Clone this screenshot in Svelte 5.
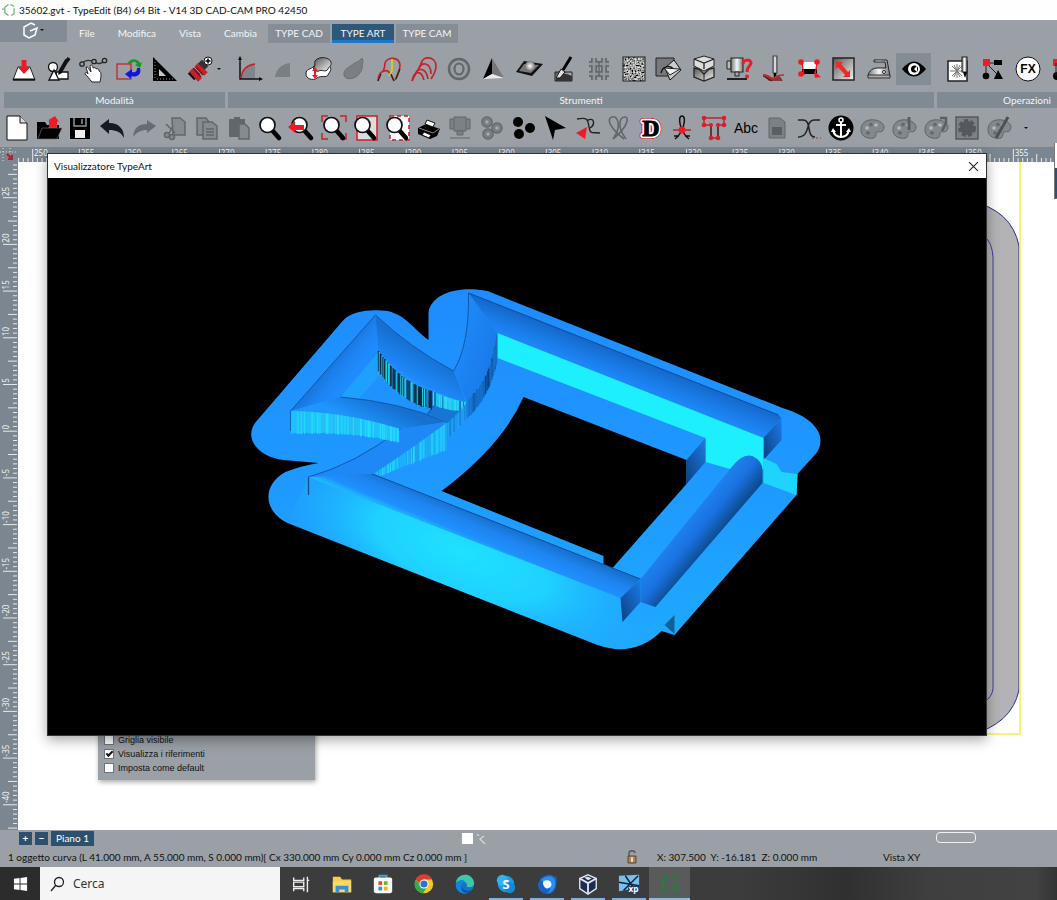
<script>
    const menus = ['File', 'Modifica', 'Vista', 'Cambia'];
    const tabs = ['TYPE CAD', 'TYPE ART', 'TYPE CAM'];
    let activeTab = $state('TYPE ART');
    let showRefs = $state(true);
    let search = $state('');

    const lens = '<path d="M14 14l7 8" stroke="#000" stroke-width="4.5" stroke-linecap="round"/><circle cx="9.500" cy="9" r="7.500" fill="#fff" stroke="#111" stroke-width="1.700"/>';
    const palette = '<path d="M1 14C1 5 9 3 15 4c7 1 11 6 8 10-1 3-4 1-6 2-2 1 0 4-3 6-6 1-13-1-13-8z" fill="#83888c" stroke="#5f6468"/><circle cx="7" cy="12" r="1.800" fill="#b6babd"/><circle cx="11" cy="8.500" r="1.800" fill="#62676b"/><circle cx="16" cy="9" r="1.800" fill="#b6babd"/><circle cx="8" cy="17" r="1.800" fill="#62676b"/>';

    const modeIcons = [
        { name: 'Incidi', svg: '<path d="M6 10h12l5 13H1z" fill="#fff" stroke="#222"/><path d="M1 22.500h22" stroke="#111" stroke-width="2"/><path d="M9.500 3h5v7h4L12 17 5.500 10h4z" fill="#ed1c24"/>' },
        { name: 'Disegno', svg: '<circle cx="6" cy="10" r="4.500" fill="#fff" stroke="#111" stroke-width="1.300"/><path d="M9 15h12v7H10z" fill="#fff" stroke="#111" stroke-width="1.300"/><path d="M7 13l5 10H2z" fill="#fff" stroke="#111" stroke-width="1.300"/><path d="M20 3l-7 12" stroke="#111" stroke-width="4"/><path d="M22 1l-2 3" stroke="#111" stroke-width="3.500"/><path d="M12 14l-1 4 4-2z"/>' },
        { name: 'Nodi', svg: '<path d="M-1 7q6-6 13-2t12-3" fill="none" stroke="#333" stroke-width="1.300"/><g fill="#9aa1a7" stroke="#222" stroke-width="1.300"><circle cx="0" cy="7" r="2.200"/><circle cx="12" cy="4.500" r="2.200"/><circle cx="22.500" cy="3.500" r="2.200"/></g><path d="M4 10c2-1 3 3 5 5l-1-6c1-2 3-1 3 2 2-1 3 0 3 1 2-1 3 0 3 2 3 1 2 6 1 11h-8c-3-3-4-6-7-8 0-2 2-2 3 0z" fill="#fff" stroke="#222"/>' },
        { name: 'Trasforma', svg: '<rect x="0" y="7" width="14" height="15" fill="none" stroke="#c1272d" stroke-width="1.300"/><path d="M10 7c3-6 10-6 13-1l2-1-2 6-5-3 2-1c-2-3-4-3-6 0z" fill="#159a1e"/><path d="M23 11c2 7-4 10-9 8v3l-6-5 7-5v3c3 1 5 0 5-4z" fill="#1018d8"/>' },
        { name: 'Squadra', svg: '<path d="M1 0l24 24H1z"/><path d="M7 12l7 7H7z" fill="#c4c9cd"/><path d="M3 5v16M5 22h17" stroke="#999" stroke-dasharray="1 2"/>' },
        { name: 'Fresa', svg: '<path d="M4 20l6-6" stroke="#111" stroke-width="9"/><path d="M13 11l5-5" stroke="#333" stroke-width="9"/><path d="M4 13l9 10M9 8l10 9" stroke="#c8202a" stroke-width="5"/><path d="M9 10l7 8M7 12l7 8" stroke="#7a1016" stroke-width="1.500"/><circle cx="21" cy="4" r="4" fill="#fff" stroke="#111"/><path d="M18.500 4h5M21 1.500v5" stroke="#000" stroke-width="1.500"/>' }
    ];
    const toolIcons = [
        { name: 'Profilo', svg: '<path d="M4 22C5 14 10 8 18 7v15z" fill="#81868a"/><path d="M3 1v21h20" fill="none" stroke="#111" stroke-width="1.500"/><path d="M1 3l2-4 2 4zM22 20l4 2-4 2z"/><path d="M4 21C5 13 10 8 18 7" fill="none" stroke="#c8202a" stroke-width="1.500"/>' },
        { name: 'Quarto', svg: '<path d="M3 20C4 12 10 7 18 6v14z" fill="#7a7f84"/>' },
        { name: 'Livello', svg: '<path d="M-1 17c0-6 5-4 8-8s10-5 15-1c4 5 0 7-1 10s-7 0-11 3c-4 3-11 1-11-4z" fill="#fff" stroke="#222"/><path d="M8 4c5-6 15-3 16 1s-2 4-3 7c-2 4-7 0-9 2-3 1-7-1-5-4 2-2 0-4 1-6z" fill="url(#metal)" stroke="#222"/><path d="M8 10l3 4H9v4h2l-3 4-3-4h2v-4H5z" fill="#ed1c24"/>' },
        { name: 'Rivoluzione', svg: '<path d="M2 18c-1-6 6-8 9-11l6-3 3-3 1 3c-1 5 0 9-4 13-3 5-14 7-15 1z" fill="#7b7f83" stroke="#6d7276"/>' },
        { name: 'Sweep', svg: '<path d="M6 15C8 10 8 8 8 6c2-6 14-7 15 2 0 5-2 9-5 15" fill="none" stroke="#c8202a" stroke-width="1.600"/><path d="M1 24c0-10 9-14 13-6l3 6" fill="none" stroke="#c8202a" stroke-width="1.600"/><path d="M15 2v12l-3 5" fill="none" stroke="#d2d619" stroke-width="1.600"/><path d="M4 17l-3 7M14 17l3 7M23 12l-4 10" stroke="#222" stroke-width="1.200"/>' },
        { name: 'Sezioni', svg: '<g fill="none" stroke="#c8202a" stroke-width="1.600"><path d="M0 24c2-10 9-12 12-1"/><path d="M3 18c1-7 11-9 13 4"/><path d="M7 12c1-7 12-8 12 5"/><path d="M9 7c1-9 15-8 15 2 0 6-2 8-5 13"/><path d="M0 24L10 5"/></g>' },
        { name: 'Anello', svg: '<circle cx="12" cy="12" r="10" fill="#999da1" stroke="#62676c" stroke-width="2.500"/><ellipse cx="12" cy="12" rx="4.500" ry="5.500" fill="#9aa1a7" stroke="#62676c" stroke-width="2.200"/>' },
        { name: 'Piramide', svg: '<path d="M10 1L1 22l9-5z"/><path d="M10 1v16l12 4z" fill="#777"/><path d="M1 22l9-5 12 4z" fill="#e8e8e8"/>' },
        { name: 'Sfera', svg: '<path d="M7 4l19 3-11 12-16-4z" fill="#111"/><path d="M7 7l15 1-8 8-12-2z" fill="#777"/><circle cx="13" cy="9" r="5" fill="url(#ball)"/>' },
        { name: 'Sculpt', svg: '<path d="M3 15h17v9H3z" fill="url(#metal)" stroke="#222"/><path d="M3 24c4-8 9-9 17-5v5z" fill="#333"/><path d="M19 0l-8 13" stroke="#000" stroke-width="3"/><path d="M9 12l4 3-5 6H4z" fill="#ddd" stroke="#111"/>' },
        { name: 'Trama', svg: '<path d="M2 7h20M2 17h20M7 1v22M17 1v22" stroke="#63686d" stroke-width="6"/><path d="M2 7h20M2 17h20M7 1v22M17 1v22" stroke="#92979b" stroke-width="2.500"/><path d="M12 5v15" stroke="#63686d" stroke-width="1.500"/>' },
        { name: 'Texture', svg: '<rect x="1" y="0" width="22" height="24" fill="#77797b"/><rect x="1" y="0" width="22" height="24" filter="url(#grain)"/><rect x="1" y="0" width="22" height="24" fill="none" stroke="#222"/>' },
        { name: 'Riempi', svg: '<path d="M-1 1h18v18H-1z" fill="#777a7d" stroke="#222"/><path d="M8 11l9-8 7 10-11 10z" fill="#ccc" stroke="#111"/><path d="M4 16c2-8 10-8 13-3" fill="none" stroke="#111" stroke-width="1.400"/><path d="M7 11l16 1-10 6z" fill="#eee" stroke="#222"/>' },
        { name: 'Blocchi', svg: '<path d="M12-1l10 3v7l-10 5L2 9V2z" fill="#ddd" stroke="#222"/><path d="M2 2l10 4 10-4M12 6v6" fill="none" stroke="#222" stroke-width="1.300"/><path d="M2 11l5 1 5 5 5-5 5-1v9l-10 4-10-4z" fill="url(#metal)" stroke="#222" stroke-width="1.300"/><path d="M12 17v7" stroke="#222"/>' },
        { name: 'Simula', svg: '<path d="M0 4h4v8H0z" fill="#bbb" stroke="#222"/><rect x="4" y="1" width="12" height="14" fill="url(#steel)" stroke="#222"/><path d="M8 15h4v4H8z" fill="#aaa" stroke="#222"/><path d="M0 22h20" stroke="#111" stroke-width="1.800"/><path d="M16 7c0-5 8-5 8-1 0 3-4 3-4 9" fill="none" stroke="#ed1c24" stroke-width="3"/><circle cx="20" cy="19.500" r="2" fill="#ed1c24"/>' },
        { name: 'Tasta', svg: '<rect x="11" y="-1" width="4" height="17" fill="url(#steel)" stroke="#444"/><path d="M13 16v4" stroke="#000" stroke-width="2.500"/><path d="M1 18c6-2 9 5 13 2 4-3 5 1 7 4H7z" fill="#7c3a38"/><path d="M1 18c5-1 8 5 11 3 3-3 6-3 10-3" fill="none" stroke="#d8222a" stroke-width="1.600"/><path d="M1 19l9 5" stroke="#222"/>' },
        { name: 'Scala', svg: '<path d="M6 5h13v7H6z" fill="#fff"/><path d="M5 12h15v5H5z"/><path d="M5 6l2 12M20 6l-2 12" stroke="#ed1c24" stroke-width="1.300"/><g fill="#ed1c24"><circle cx="4" cy="5" r="2.800"/><circle cx="20" cy="5" r="2.800"/><circle cx="4" cy="17" r="2.800"/><path d="M17 14l7 6-6 1z"/></g>' },
        { name: 'Allunga', svg: '<rect x="1" y="1" width="21" height="22" fill="url(#metal)" stroke="#222" stroke-width="1.500"/><path d="M4 5h7l-2 2 7 8 2-2v7h-7l2-2-7-8-2 2z" fill="#ed2b24"/>' },
        { name: 'Liscia', svg: '<path d="M1 19c1-6 5-8 10-8h8l-1-6H7V3h13l3 16z" fill="url(#steel)" stroke="#222"/><path d="M1 18h22v3H1z" fill="#aaa" stroke="#333"/><circle cx="17" cy="15" r="1.500" fill="#fff" stroke="#222"/>' },
        { name: 'Visualizza', active: true, svg: '<path d="M0 12Q12-3 24 12 12 27 0 12z" fill="#000"/><circle cx="12" cy="12" r="6" fill="#fff"/><circle cx="12.500" cy="12" r="3.500" fill="#000"/><path d="M12 12l3-3v6z" fill="#fff"/>' }
    ];
    const opIcons = [
        { name: 'Incisione', svg: '<path d="M2 4h19v20H2z" fill="#fff" stroke="#222" stroke-width="1.500"/><path d="M4 14h14M11 7v14M6 9l10 10M16 9L6 19M8 8l6 12M14 8L8 20" stroke="#777"/><rect x="16" y="0" width="5" height="15" fill="url(#steel)" stroke="#222"/><path d="M17 15h4l-2 6z"/>' },
        { name: 'Albero', svg: '<path d="M5 6h12M5 6l13 13M5 6v13" stroke="#222"/><path d="M2 2h7v7H2z" fill="#ed1c24"/><path d="M13 3h8v5h-8z"/><circle cx="5" cy="19" r="3.300"/><path d="M17 13l5 9h-9z"/>' },
        { name: 'FX', svg: '<circle cx="12" cy="12" r="12" fill="#fff" stroke="#111"/><text x="12" y="16" text-anchor="middle" font-family="Liberation Sans" font-weight="bold" font-size="12">FX</text>' },
        { name: 'Gruppo', svg: '<path d="M2 2h7v7H2z" fill="#ed1c24"/><circle cx="6" cy="19" r="4"/><path d="M5 6v13" stroke="#222"/>' }
    ];
    const barIcons = [
        { name: 'Nuovo', svg: '<path d="M2 0h13l7 7v17H2z" fill="#fff" stroke="#111"/><path d="M15 0v7h7" fill="#ddd" stroke="#111"/>' },
        { name: 'Apri', svg: '<path d="M0 6h8l2 3h12v14H0z"/><path d="M12 10V4l-2 1 8-5 4 6-2-1v9l-9-1z" fill="#ed1c24"/><path d="M1 23l4-11h20l-5 11z" stroke="#777" stroke-width=".6"/>' },
        { name: 'Salva', svg: '<path d="M2 2h20v21H2z"/><path d="M6 2v8h12V2M14 3v5" fill="none" stroke="#8e9499" stroke-width="1.500"/><path d="M7 14h10v8H7z" fill="#eee"/>' },
        { name: 'Annulla', svg: '<path d="M0 10l9-7v4c10 0 15 6 15 15-3-6-8-8-15-8v4z" fill="#151b22"/>' },
        { name: 'Ripeti', svg: '<path d="M24 10l-9-6v4C6 8 2 12 1 21c4-5 8-7 14-7v3z" fill="#666c71"/>' },
        { name: 'Taglia', svg: '<g fill="#868b8f" stroke="#62676b" stroke-width="1.500"><path d="M9 2h8l5 4v13H10z"/><path d="M3 8l9 9M10 10l-5 9" fill="none"/><circle cx="4" cy="19" r="2.500"/><circle cx="9" cy="21" r="2.500"/></g>' },
        { name: 'Copia', svg: '<g fill="#868b8f" stroke="#62676b" stroke-width="1.500"><path d="M2 2h9l3 4v13H2z"/><path d="M8 6h9l5 4v13H8z"/><path d="M11 13h8M11 16h8M11 19h8"/></g>' },
        { name: 'Incolla', svg: '<path d="M2 3h16v18H2z" fill="#62676b"/><path d="M7 1h6v4H7z" fill="#62676b"/><path d="M12 8h6l4 4v11H12z" fill="#868b8f" stroke="#62676b" stroke-width="1.500"/>' },
        { name: 'Zoom', svg: lens },
        { name: 'Zoom precedente', svg: lens + '<path d="M-2 11l7-6v4h9v5H5v3z" fill="#ed1c24"/>' },
        { name: 'Zoom selezione', svg: '<path d="M6 0H0v6M18 0h6v6M6 23H0v-6M18 23h6v-6" fill="none" stroke="#c8202a" stroke-width="1.500"/>' + lens },
        { name: 'Zoom tutto', svg: '<path d="M4 0h20v24H4z" fill="#ddd" stroke="#c8202a" stroke-width="1.500"/>' + lens },
        { name: 'Zoom pagina', svg: '<path d="M5 0h19v24H5z" fill="#fff" stroke="#c8202a" stroke-dasharray="4 3" stroke-width="1.500"/>' + lens },
        { name: 'Stampa', svg: '<path d="M1 12l8-4 14 5-3 7-7 3-12-5z"/><path d="M10 4l8 3-2 4-8-3z" fill="#fff" stroke="#111"/><path d="M7 16l7 3-2 3-7-3z" fill="#fff" stroke="#111"/><path d="M2 12l14 5 6-4" fill="none" stroke="#888"/>' },
        { name: 'Macchina', svg: '<g fill="#7c8185" stroke="#62676b"><path d="M2 3h20v10H2z"/><path d="M6 1h12v14H6z"/><path d="M9 15h6v4H9zM2 22h20"/></g>' },
        { name: 'Oggetti', svg: '<g fill="#787d81" stroke="#62676b" stroke-width="1.200"><circle cx="7" cy="6" r="5.200"/><circle cx="17" cy="12" r="5.200"/><circle cx="8" cy="18" r="5.200"/></g><g fill="#a5a9ac"><circle cx="7" cy="6" r="1.800"/><circle cx="17" cy="12" r="1.800"/><circle cx="8" cy="18" r="1.800"/></g>' },
        { name: 'Punti', svg: '<circle cx="6" cy="6" r="5"/><circle cx="18" cy="12" r="5"/><circle cx="7" cy="18" r="5"/>' },
        { name: 'Seleziona', svg: '<path d="M1 0l21 12-11 2-2 10z"/>' },
        { name: 'Tangente', svg: '<path d="M2 3c10-2 11 0 12 8s4 5 11 6M13 4c7-3 7 5 2 8" fill="none" stroke="#222" stroke-width="1.400"/><path d="M1 17l11-6-2 12z" fill="#ed1c24"/>' },
        { name: 'Fiocco', svg: '<path d="M6 23C20 12 23 1 18 1s-9 9 1 22M17 23C3 12-1 3 5 1s10 10 1 22" fill="none" stroke="#62676b" stroke-width="1.600"/>' },
        { name: 'Contorno', svg: '<g text-anchor="middle" font-family="Liberation Serif" font-weight="bold" font-size="24" stroke-linejoin="round"><text x="12" y="20" stroke="#c8202a" stroke-width="6">D</text><text x="12" y="20" stroke="#fff" stroke-width="4.500">D</text><text x="12" y="20" stroke="#000">D</text></g>' },
        { name: 'Incrocio', svg: '<path d="M5 23c9-7 12-23 7-23S10 16 19 23M4 20h5M15 20h5" fill="none" stroke="#111" stroke-width="1.500"/><path d="M3 14h18" stroke="#c8202a" stroke-width="1.500"/><circle cx="12" cy="14" r="3.500" fill="#ed1c24"/>' },
        { name: 'Testo nodi', svg: '<path d="M2 2h20v7h-6v13H9V9H2z" fill="none" stroke="#c8202a" stroke-width="1.500"/><path d="M9 10v11M16 10v11" stroke="#333" stroke-width="1.300"/><g fill="#d81e28"><circle cx="2" cy="2" r="2.300"/><circle cx="22" cy="2" r="2.300"/><circle cx="2" cy="9" r="2.300"/><circle cx="22" cy="9" r="2.300"/><circle cx="9" cy="9" r="2"/><circle cx="16" cy="9" r="2"/><circle cx="9" cy="22" r="2.300"/><circle cx="16" cy="22" r="2.300"/></g>' },
        { name: 'Testo', svg: '<text x="12" y="17" text-anchor="middle" font-family="Liberation Sans" font-size="14">Abc</text>' },
        { name: 'Modello', svg: '<path d="M4 2h11l5 4v16H4z" fill="#7c8185" stroke="#62676b"/><path d="M7 11h10v8H7z" fill="#5a5f63"/>' },
        { name: 'Raccordo', svg: '<path d="M1 4h5c9 0 3 17 12 17M23 4h-6c-9 0-3 17-16 17" fill="none" stroke="#222" stroke-width="1.500"/><path d="M15 22h9" stroke="#a33" stroke-dasharray="2 2"/>' },
        { name: 'Ancora', svg: '<circle cx="12" cy="12" r="12.500"/><path d="M12 6v16M7 9h10M4 14c1 5 4 7 8 7s7-2 8-7" fill="none" stroke="#fff" stroke-width="2"/><circle cx="12" cy="4" r="2" fill="none" stroke="#fff" stroke-width="1.500"/><path d="M2 16l2-4 3 4zM17 16l3-4 2 4z" fill="#fff"/>' },
        { name: 'Colori', svg: palette },
        { name: 'Colori 2', svg: palette + '<path d="M17 1v13" stroke="#5a5f63" stroke-width="3"/>' },
        { name: 'Colori 3', svg: palette + '<path d="M16 2h6v5l-4 8" fill="none" stroke="#5a5f63" stroke-width="2.500"/>' },
        { name: 'Sfondo', svg: '<path d="M1 1h22v22H1z" fill="#7d8286" stroke="#55595d" stroke-width="1.500"/><circle cx="12" cy="12" r="7" fill="#55595d" stroke="#55595d" stroke-width="4" stroke-dasharray="4 2"/>' },
        { name: 'Pennello', svg: palette + '<path d="M21 1L9 22" stroke="#4c5155" stroke-width="3"/>' }
    ];

    const apps = [
        { name: 'Visualizzazione attività', svg: '<path d="M4 5v3h11V5M4 20v-3h11v3M4 10h11v5H4zM19 4v17M19 8h2" fill="none" stroke="#eee" stroke-width="1.500"/>' },
        { name: 'Esplora file', svg: '<path d="M2 4h8l2 3h10v14H2z" fill="#f8cf4a"/><path d="M2 9h20v12H2z" fill="#fbd968"/><path d="M5 21v-7h14v7h-4v-3H9v3z" fill="#3b8fd4"/>' },
        { name: 'Microsoft Store', svg: '<path d="M8 6V3h8v3" fill="none" stroke="#3aa3dd" stroke-width="2"/><rect x="2" y="5" width="20" height="17" rx="2" fill="#f8f8f8"/><path d="M7 9h4v4H7z" fill="#e74b25"/><path d="M13 9h4v4h-4z" fill="#6fb52c"/><path d="M7 15h4v4H7z" fill="#2a94dc"/><path d="M13 15h4v4h-4z" fill="#f4b41a"/>' },
        { name: 'Chrome', svg: '<circle cx="12" cy="12" r="10" fill="#f9c825"/><path d="M3 7a10 10 0 0 1 18 0h-9v10z" fill="#e23b30"/><path d="M3 7a10 10 0 0 0 8 15l5-8-8-1z" fill="#34a853"/><circle cx="12" cy="12" r="5" fill="#fff"/><circle cx="12" cy="12" r="3.900" fill="#2f70e0"/>' },
        { name: 'Edge', svg: '<circle cx="12" cy="12" r="10" fill="#1673c5"/><path d="M2 11C3 0 20-2 22 11c0 5-6 5-8 4 2-6-8-9-12-4z" fill="#3cc8a8"/><path d="M2 12c4-6 9-5 10-2-3 0-5 3-3 7s7 5 10 2c-8 8-18 1-17-7z" fill="#0f86dd"/><path d="M9 12c-2 7 6 9 11 6-4 6-15 5-11-6z" fill="#174f9c"/>' },
        { name: 'Skype', open: true, svg: '<circle cx="12" cy="12" r="9" fill="#1a9de8"/><circle cx="8" cy="8" r="6" fill="#30b4f0"/><circle cx="16" cy="16" r="6" fill="#1288d8"/><text x="12" y="17" text-anchor="middle" font-family="Open Sans" font-weight="bold" font-size="14" fill="#fff">S</text>' },
        { name: 'Thunderbird', open: true, svg: '<path d="M2 12l3-6c5-5 12-5 15-2l2-1c1 8 1 19-9 20C6 23 2 18 2 12z" fill="#1762c8"/><path d="M5 8c5-6 15-6 16 1s-3 13-9 13c6-3 5-11-7-14z" fill="#2490f0"/><path d="M8 9c4-2 9-1 9 4-1 3-5 5-7 3s-3-4-2-7z" fill="#f2f7ff"/>' },
        { name: 'VirtualBox', open: true, svg: '<path d="M12 2l9 4v11l-9 6-9-6V6z" fill="#1c2b50" stroke="#dfe6f2" stroke-width="1.500"/><path d="M3 6l9 5 9-5M12 11v11" fill="none" stroke="#dfe6f2" stroke-width="2"/><path d="M8 5l4-1 4 2-4 2z" fill="#dfe6f2"/>' },
        { name: 'XP', open: true, svg: '<path d="M1 3l22-1v14L1 20z" fill="#79c0ee"/><path d="M1 10l22 4M8 3l10 15M22 3L6 19" stroke="#10233c" stroke-width="1.600"/><path d="M11 14h12v9H11z" fill="#1c3d66"/><text x="17" y="21" text-anchor="middle" font-family="Open Sans" font-weight="bold" font-size="9" fill="#fff">xp</text>' },
        { name: 'TypeEdit', open: true, active: true, svg: '<path d="M10 4L4 8v8l6 4M15 4l5 3M20 13v4l-5 3M15 12h5" fill="none" stroke="#2c7a42" stroke-width="3"/>' }
    ];

    // rulers: one tick each half millimetre, a number every five
    const hTicks = Array.from({ length: 226 }, (_, i) => ({ pos: 14 + i * 4.67, i: i - 4 }));
    const hLabels = Array.from({ length: 22 }, (_, i) => ({ pos: 33 + i * 46.7, text: 250 + i * 5 }));
    const vTicks = Array.from({ length: 143 }, (_, i) => ({ pos: 3 + i * 4.67, i: i - 7 }));
    const vLabels = Array.from({ length: 14 }, (_, i) => ({ pos: 35 + i * 46.7, text: 25 - i * 5 }));

    // vertical streaks on the curved walls of the relief
    function streaks(x0, y0, cx, cy, x1, y1, h0, h1, colors) {
        const out = [];
        const n = Math.round(Math.abs(x1 - x0));
        for (let i = 0; i < n; i++) {
            const t = i / n;
            const x = (1 - t) * (1 - t) * x0 + 2 * t * (1 - t) * cx + t * t * x1;
            const y = (1 - t) * (1 - t) * y0 + 2 * t * (1 - t) * cy + t * t * y1;
            const r = Math.abs(Math.sin(i * 12.9898 + x0) * 43758.5453) % 1;
            const h = h0 + (h1 - h0) * t;
            out.push({ x, y, y2: y + h * (0.92 + r * 0.08), color: colors[Math.floor(r * colors.length)] });
        }
        return out;
    }
    const walls = [
        ...streaks(378, 351, 402, 384, 432, 391, 22, 19, ['#06283c', '#1ec8f0', '#0a3a58', '#2fd6e2', '#0b2f3c', '#1a8cc8']),
        ...streaks(432, 391, 450, 400, 466, 402, 15, 9, ['#1ec8f0', '#2fe6f2', '#1676c0', '#28d4f8']),
        ...streaks(291, 411, 345, 412, 399, 429, 24, 14, ['#1ec0ff', '#20c4fc', '#28bcf4', '#1ed0ff', '#26dcfc']),
        ...streaks(446, 423, 415, 446, 373, 474, 28, 5, ['#1eb4ff', '#22ccff', '#1ca4ec', '#1eb0f8', '#28d8fc']),
        ...streaks(447, 423, 458, 413, 467, 402, 16, 16, ['#1e98f0', '#1a84dc', '#1ea4f4']),
        ...streaks(497, 334, 491, 375, 466, 402, 24, 18, ['#1260b4', '#1470c8', '#0c3f80', '#126cc4', '#1a84e4']),
        ...streaks(497, 334, 491, 375, 472, 396, 22, 16, ['#1260b4', '#1470c8', '#0c3f80', '#126cc4'])
    ];
    const base = 'M428 340V313C430 295 455 285 487 291L782 408C815 418 827 436 816 453L797 474L796 495L674 635L661 631C642 650 620 653 597 645L287 523C264 512 260 486 285 472Q300 466 318 463L283 460C255 456 242 436 257 420L343 320C352 311 370 309 387 311C405 315 412 328 428 340ZM523 397Q502 445 441 491L603 556V564L612 568L686 484V460Z';
</script>

{#snippet icon(svg)}
    <svg class="icon" viewBox="0 0 24 24" aria-hidden="true">{@html svg}</svg>
{/snippet}

{#snippet tools(list)}
    {#each list as item}
        <button class="tool" class:active={item.active} aria-label={item.name}>{@render icon(item.svg)}</button>
    {/each}
{/snippet}

<svg class="defs" aria-hidden="true">
    <defs>
        <linearGradient id="metal" x1="0" y1="0" x2="1" y2="1"><stop offset="0" stop-color="#555" /><stop offset="1" stop-color="#f4f4f4" /></linearGradient>
        <linearGradient id="steel"><stop offset="0" stop-color="#777" /><stop offset=".5" stop-color="#f6f6f6" /><stop offset="1" stop-color="#777" /></linearGradient>
        <radialGradient id="ball"><stop offset="0" stop-color="#fff" /><stop offset="1" stop-color="#777" /></radialGradient>
        <filter id="grain" x="0" y="0" width="1" height="1"><feTurbulence type="fractalNoise" baseFrequency=".6" /><feColorMatrix values="2 0 0 0 -.65  2 0 0 0 -.65  2 0 0 0 -.65  0 0 0 0 1" /></filter>
    </defs>
</svg>

<div class="app">
    <header class="title-bar">
        <svg viewBox="0 0 14 14" aria-hidden="true"><path d="M7 1L3 4v6l4 3M9 1l4 2M13 5v6l-3 2M0 6h2" fill="none" stroke="#6fae6f" stroke-width="1.300" /></svg>
        <h1>35602.gvt - TypeEdit (B4) 64 Bit - V14 3D CAD-CAM PRO 42450</h1>
    </header>

    <nav class="menu-bar">
        <button class="logo" aria-label="Menu principale">
            <svg viewBox="0 0 24 20" aria-hidden="true">
                <path d="M13 5l-4-2-7 4v8l5 3 6-3 2-7-7 3" fill="none" stroke="#fff" stroke-width="1.500" />
                <path d="M18 9h4l-2 2z" fill="#111" />
            </svg>
        </button>
        <div class="menus">
            {#each menus as menu}
                <button class="menu">{menu}</button>
            {/each}
        </div>
        <div class="tabs">
            {#each tabs as tab}
                <button class="tab" class:selected={activeTab === tab} onclick={() => (activeTab = tab)}>{tab}</button>
            {/each}
        </div>
    </nav>

    <section class="ribbon">
        <div class="group modes">
            <div class="icons">
                {@render tools(modeIcons)}
                <button class="more" aria-label="Altre modalità"></button>
            </div>
            <h2>Modalità</h2>
        </div>
        <div class="group strumenti">
            <div class="icons">{@render tools(toolIcons)}</div>
            <h2>Strumenti</h2>
        </div>
        <div class="group operazioni">
            <div class="icons">{@render tools(opIcons)}</div>
            <h2>Operazioni</h2>
        </div>
    </section>

    <section class="toolbar">
        {@render tools(barIcons)}
        <button class="more last" aria-label="Altri comandi"></button>
    </section>

    <div class="ruler-row">
        <svg class="origin" viewBox="0 0 18 15" aria-hidden="true">
            <path d="M3 1v14M0 5h18M10 1v4" stroke="#dde1e4" stroke-dasharray="1 2" /><path d="M7 7l5 5m0-4v4H8" fill="none" stroke="#a02838" stroke-width="2" />
        </svg>
        <svg class="ruler-h" aria-hidden="true">
            {#each hTicks as t}
                <path d="M{t.pos - 18} 15v{t.i % 10 === 0 ? -13 : t.i % 5 === 0 ? -8 : -4}" />
            {/each}
            {#each hLabels as l}
                <text x={l.pos - 17} y="9">{l.text}</text>
            {/each}
        </svg>
    </div>

    <main class="workspace">
        <svg class="ruler-v" aria-hidden="true">
            {#each vTicks as t}
                <path d="M17 {t.pos}h{t.i % 10 === 0 ? -14 : t.i % 5 === 0 ? -9 : -4}" />
            {/each}
            {#each vLabels as l}
                <text transform="translate(9 {l.pos - 1}) rotate(-90)">{l.text}</text>
            {/each}
        </svg>
        <div class="canvas">
            <svg class="part" viewBox="0 0 60 580" aria-hidden="true">
                <path d="M0 39Q42 48 49 84V528Q42 562 0 573z" fill="#b3b3b5" stroke="#2b2b8c" />
                <path d="M14 74Q22 80 23 95V527Q22 535 14 540" fill="none" stroke="#3c3ca0" />
                <path d="M50 0V572H0" fill="none" stroke="#f4f43c" stroke-width="1.500" />
            </svg>
            <div class="options">
                <label><input type="checkbox" />Griglia visibile</label>
                <label><input type="checkbox" bind:checked={showRefs} />Visualizza i riferimenti</label>
                <label><input type="checkbox" />Imposta come default</label>
            </div>
        </div>

        <section class="viewer">
            <header>
                <h2>Visualizzatore TypeArt</h2>
                <button class="close" aria-label="Chiudi">
                    <svg viewBox="0 0 10 10"><path d="M1 1l8 8M9 1l-8 8" stroke="#222" /></svg>
                </button>
            </header>
            <svg class="scene" viewBox="48 178 937 557" role="img" aria-label="Modello 3D">
                <defs>
                    <linearGradient id="floor" gradientUnits="userSpaceOnUse" x1="480" y1="290" x2="480" y2="650"><stop offset="0" stop-color="#1e8cff" /><stop offset=".5" stop-color="#1e98ff" /><stop offset="1" stop-color="#1eaaff" /></linearGradient>
                    <linearGradient id="ridge" gradientUnits="userSpaceOnUse" x1="631" y1="355" x2="617" y2="391"><stop offset="0" stop-color="#1464c4" /><stop offset=".35" stop-color="#1878e2" /><stop offset=".75" stop-color="#1e88fa" /><stop offset="1" stop-color="#1eb0ff" /></linearGradient>
                    <linearGradient id="front" gradientUnits="userSpaceOnUse" x1="509" y1="527" x2="497" y2="556"><stop offset="0" stop-color="#1670cc" /><stop offset=".35" stop-color="#1e84f0" /><stop offset=".75" stop-color="#1e90ff" /><stop offset="1" stop-color="#1ec8ff" /></linearGradient>
                    <linearGradient id="rod" gradientUnits="userSpaceOnUse" x1="684" y1="520" x2="711" y2="542"><stop offset="0" stop-color="#1e84f0" /><stop offset=".5" stop-color="#1a72e0" /><stop offset=".7" stop-color="#1464c4" /><stop offset="1" stop-color="#0e4c90" /></linearGradient>
                    <linearGradient id="end" x1="1" y1="0" x2="0" y2="1"><stop offset="0" stop-color="#1c7ce8" /><stop offset="1" stop-color="#0c3f80" /></linearGradient>
                    <linearGradient id="left" gradientUnits="userSpaceOnUse" x1="325" y1="360" x2="350" y2="380"><stop offset="0" stop-color="#166fd0" /><stop offset=".6" stop-color="#1e84f4" /><stop offset="1" stop-color="#1e8cff" /></linearGradient>
                    <linearGradient id="lower" gradientUnits="userSpaceOnUse" x1="375" y1="398" x2="362" y2="425"><stop offset="0" stop-color="#1670d0" /><stop offset="1" stop-color="#1e96ff" /></linearGradient>
                    <linearGradient id="upper" gradientUnits="userSpaceOnUse" x1="422" y1="350" x2="406" y2="378"><stop offset="0" stop-color="#1670d0" /><stop offset="1" stop-color="#1e8cff" /></linearGradient>
                    <linearGradient id="side" gradientUnits="userSpaceOnUse" x1="460" y1="330" x2="494" y2="340"><stop offset="0" stop-color="#1e88f8" /><stop offset="1" stop-color="#1a7cea" /></linearGradient>
                    <radialGradient id="glow" gradientUnits="userSpaceOnUse" cx="0" cy="0" r="1" gradientTransform="translate(462 552) rotate(22) scale(205 85)"><stop offset="0" stop-color="#1ee2ff" /><stop offset=".45" stop-color="#1ed6ff" stop-opacity=".92" /><stop offset="1" stop-color="#1eaaff" stop-opacity="0" /></radialGradient>
                    <clipPath id="wall"><path d="M308 477L620 598L622 622L661 631L620 655L597 645L287 523z" /></clipPath>
                </defs>
                <path d={base} fill="url(#floor)" fill-rule="evenodd" />

                <!-- lower wall and its lit face -->
                <path d="M287 470H660V650L597 645L287 523z" fill="url(#glow)" clip-path="url(#wall)" />
                <path d="M308 477V495" stroke="#0d4f92" stroke-width="1.300" />

                <!-- cross-shaped ridges on the left -->
                <path d="M375 315L378 352L340 397L290 411z" fill="url(#left)" />
                <path d="M290 411L340 397Q400 402 446 422L400 429Q345 412 290 411z" fill="url(#lower)" />
                <path d="M400 429L446 422Q420 447 372 474L420 494L308 477Q355 464 400 429z" fill="#1e88f6" />
                <path d="M375 315Q410 348 453 371L466 403Q412 387 378 352z" fill="url(#upper)" />
                <path d="M453 371Q469 345 468 293L497 333Q494 366 467 403z" fill="url(#side)" />
                <path d="M378 352L340 397Q350 398 358 399L382 372z" fill="#1ea0ff" />
                <path d="M375 315Q410 348 453 371Q469 345 468 293M375 315L290 411V431M340 397Q400 402 446 422V438M308 477Q355 464 400 429" fill="none" stroke="#0f58ac" />
                <path d="M427 414L438 399Q455 402 467 408L447 423z" fill="#1975d4" />
                <path d="M427 414L438 399" stroke="#0d4c98" />

                {#each walls as w}
                    <path d="M{w.x} {w.y}V{w.y2}" stroke={w.color} stroke-width="1.300" />
                {/each}

                <!-- top bar -->
                <path d="M468 293L778 415L781 418L763 438L497 333z" fill="url(#ridge)" />
                <path d="M468 293L778 415" stroke="#0f4c9a" />
                <path d="M763 438L781 418V440L763 460z" fill="url(#end)" />
                <path d="M497 333L763 438V469L733 470L705 462V438L497 358z" fill="#1eefff" />
                <path d="M686 460L705 438V462L686 484z" fill="url(#end)" />
                <path d="M763 458L776 464L781 472L797 474L796 495L763 483z" fill="#1ed4ff" />

                <!-- hinge rod -->
                <path d="M640 579L732 466Q742 453 752 456Q762 461 762 470V483L655 607L640 602z" fill="url(#rod)" />

                <!-- front bar -->
                <path d="M308 477L372 474L640 579L620 598z" fill="url(#front)" />
                <path d="M372 474L640 579" stroke="#0f4c9a" />
                <path d="M620 598L640 579V602L622 622z" fill="url(#end)" />
                <path d="M674 615L664 625L674 634z" fill="#0f6298" />
            </svg>
        </section>
        <aside class="palette" aria-label="Tavolozza"></aside>
    </main>

    <div class="plane-bar">
        <button class="plane small" aria-label="Aggiungi piano">+</button>
        <button class="plane small" aria-label="Rimuovi piano">−</button>
        <button class="plane">Piano 1</button>
        <span class="swatch"></span>
        <svg class="pointer" viewBox="0 0 12 12" aria-hidden="true"><path d="M1 2h2M8 3L4 6l5 5" fill="none" stroke="#d6d9dc" stroke-width="1.300" /></svg>
        <span class="thumb"></span>
    </div>

    <footer class="status">
        <span class="object">1 oggetto curva (L 41.000 mm, A 55.000 mm, S 0.000 mm)[ Cx 330.000 mm Cy 0.000 mm Cz 0.000 mm ]</span>
        <svg class="lock" viewBox="0 0 12 14" aria-hidden="true"><path d="M3 7V3c0-3 6-3 6 0" fill="none" stroke="#5c5750" stroke-width="1.500" /><path d="M2 6h8v7H2z" fill="#a8845a" stroke="#54483a" /><path d="M5 7h2v5H5z" fill="#f0d8b0" /></svg>
        <span class="coords">X: 307.500&nbsp; Y: -16.181&nbsp; Z: 0.000 mm</span>
        <span class="view">Vista XY</span>
    </footer>

    <nav class="taskbar">
        <button class="start" aria-label="Start">
            <svg viewBox="0 0 16 16"><path d="M1 3l6-1v6H1zM8 2l7-1v7H8zM1 9h6v6l-6-1zM8 9h7v7l-7-1z" fill="#fff" /></svg>
        </button>
        <label class="search">
            <svg viewBox="0 0 16 16" aria-hidden="true"><circle cx="10" cy="6" r="4.500" fill="none" stroke="#222" stroke-width="1.300" /><path d="M7 9l-5 6" stroke="#222" stroke-width="1.300" /></svg>
            <input type="text" placeholder="Cerca" aria-label="Cerca" bind:value={search} />
        </label>
        {#each apps as app}
            <button class="app-button" class:open={app.open} class:current={app.active} aria-label={app.name}>{@render icon(app.svg)}</button>
        {/each}
    </nav>
</div>

<style>
    :global(body) {
        margin: 0;
        background: #fff;
    }

    button {
        padding: 0;
        border: none;
        background: none;
        color: inherit;
        font: inherit;
    }

    h1,
    h2 {
        margin: 0;
        font-size: inherit;
        font-weight: normal;
    }

    .defs {
        position: absolute;
        width: 0;
        height: 0;
    }

    .app {
        display: flex;
        flex-direction: column;
        min-height: 100vh;
        overflow: hidden;
        background: #9aa0a6;
        color: #111;
        font-family: Lato, "Noto Sans", sans-serif;
        font-size: 10px;
        line-height: 14px;
    }

    .title-bar {
        display: flex;
        align-items: center;
        gap: 4px;
        height: 20px;
        padding: 0 2px;
        box-sizing: border-box;
        background: #fdfefd;
    }

    .title-bar svg {
        width: 13px;
        height: 14px;
    }

    .menu-bar {
        display: flex;
        height: 23px;
        color: #f4f5f6;
    }

    .logo {
        width: 67px;
        height: 22px;
        background: #838c95;
    }

    .logo svg {
        width: 26px;
        height: 20px;
        overflow: visible;
    }

    .menus {
        display: flex;
        gap: 23px;
        width: 189px;
        padding: 3px 0 0 12px;
    }

    .tabs {
        display: flex;
        gap: 2px;
        padding-top: 4px;
    }

    .tab {
        width: 62px;
        height: 19px;
        padding-top: 2px;
        border-bottom: 3px solid transparent;
        background: #858d96;
        background-clip: border-box;
    }

    .tab.selected {
        border-bottom-color: #1e78c8;
        background: #2f5779;
    }

    .ribbon {
        display: flex;
        gap: 3px;
        padding: 10px 0 0 4px;
        overflow: hidden;
    }

    .group {
        flex: none;
        width: 180px;
    }

    .group.modes {
        width: 221px;
    }

    .group.strumenti {
        width: 706px;
    }

    .icons {
        display: flex;
        padding-left: 3px;
        margin-bottom: 7px;
    }

    .modes .icons {
        padding-left: 2px;
    }

    .group h2 {
        height: 16px;
        line-height: 16px;
        text-align: center;
        background: #7f8a93;
        color: #f4f5f6;
    }

    .tool {
        display: grid;
        place-items: center;
        width: 35px;
        height: 32px;
        flex: none;
    }

    .tool.active {
        background: #848c94;
    }

    .icon {
        width: 24px;
        height: 24px;
        overflow: visible;
    }

    .more {
        width: 6px;
        height: 32px;
        flex: none;
    }

    .more::before {
        content: "";
        display: block;
        width: 0;
        margin: 0 auto;
        border: 2px solid transparent;
        border-top-color: #111;
        border-bottom: none;
    }

    .toolbar {
        display: flex;
        padding: 4px 20px 3px 1px;
    }

    .toolbar .tool {
        flex: 1 1 0;
        width: auto;
    }

    .more.last {
        width: 22px;
    }

    .ruler-row {
        display: flex;
        height: 15px;
        background: #7b8690;
    }

    .origin {
        width: 18px;
        height: 15px;
    }

    .ruler-h {
        flex: 1;
        height: 15px;
    }

    .ruler-h path,
    .ruler-v path {
        stroke: #e8eaec;
    }

    .ruler-h text,
    .ruler-v text {
        fill: #f4f5f6;
        font-family: "Noto Sans", sans-serif;
        font-size: 8px;
    }

    .workspace {
        position: relative;
        display: flex;
        flex: 1;
        min-height: 560px;
    }

    .ruler-v {
        width: 18px;
        background: #7b8690;
    }

    .canvas {
        position: relative;
        flex: 1;
        background: #fff;
    }

    .part {
        position: absolute;
        top: 0;
        right: 27px;
        width: 60px;
        height: 580px;
    }

    .options {
        position: absolute;
        left: 80px;
        bottom: 50px;
        width: 217px;
        height: 120px;
        display: flex;
        flex-direction: column;
        justify-content: flex-end;
        padding: 0 6px 5px;
        box-sizing: border-box;
        background: #9aa0a6;
        box-shadow: 1px 2px 5px rgba(0, 0, 0, 0.35);
        font-family: "Liberation Sans", Arial, sans-serif;
        font-size: 9px;
    }

    .options label {
        display: flex;
        align-items: center;
        gap: 4px;
        height: 14px;
    }

    .options input {
        appearance: none;
        display: grid;
        place-items: center;
        width: 10px;
        height: 10px;
        margin: 0;
        border: 1px solid #6d7378;
        background: #fff;
    }

    .options input:checked::before {
        content: "";
        width: 7px;
        height: 4px;
        margin-bottom: 2px;
        border-left: 2px solid #111;
        border-bottom: 2px solid #111;
        box-sizing: border-box;
        rotate: -45deg;
    }

    .viewer {
        position: absolute;
        inset: -9px 70px 94px 47px;
        display: flex;
        flex-direction: column;
        border: 1px solid #333;
        box-sizing: border-box;
        background: #000;
        box-shadow: 0 4px 12px rgba(0, 0, 0, 0.35);
    }

    .viewer header {
        display: flex;
        align-items: center;
        justify-content: space-between;
        height: 24px;
        padding: 0 7px 0 6px;
        background: #fff;
    }

    .close svg {
        display: block;
        width: 11px;
        height: 11px;
    }

    .scene {
        flex: 1;
        min-height: 0;
        width: 100%;
    }

    .palette {
        position: absolute;
        top: -19px;
        right: 0;
        width: 3px;
        height: 56px;
        border-left: 1px solid #777;
        border-bottom: 1px solid #777;
        box-sizing: border-box;
        background: linear-gradient(#fff 46%, #2f4f72 46%);
    }

    .plane-bar {
        display: flex;
        align-items: center;
        gap: 3px;
        height: 17px;
        padding: 0 81px 0 19px;
    }

    .plane {
        width: 43px;
        height: 15px;
        background: #2c506e;
        color: #fff;
        line-height: 13px;
    }

    .plane.small {
        width: 13px;
        height: 13px;
        font-weight: bold;
    }

    .swatch {
        width: 11px;
        height: 11px;
        margin-left: 365px;
        background: #fff;
    }

    .pointer {
        width: 12px;
        height: 12px;
    }

    .thumb {
        width: 38px;
        height: 9px;
        margin: 0 0 2px auto;
        border: 1px solid #f0f1f2;
        border-radius: 4px;
    }

    .status {
        display: flex;
        align-items: center;
        height: 20px;
        padding-left: 8px;
    }

    .object {
        width: 618px;
    }

    .lock {
        width: 12px;
        height: 14px;
    }

    .coords {
        width: 226px;
        margin-left: 19px;
    }

    .taskbar {
        display: flex;
        height: 33px;
        background: linear-gradient(90deg, #3c3c3c 70%, #303030 80%, #3f3f3f 88%, #424242 98%, #333);
    }

    .start {
        width: 40px;
        background: #2c2c2c;
    }

    .start svg {
        width: 15px;
        height: 15px;
        vertical-align: middle;
    }

    .search {
        display: flex;
        align-items: center;
        gap: 8px;
        width: 240px;
        padding-left: 9px;
        box-sizing: border-box;
        background: #f5f5f5;
    }

    .search svg {
        width: 16px;
        height: 16px;
    }

    .search input {
        flex: 1;
        min-width: 0;
        padding: 0;
        border: none;
        outline: none;
        background: none;
        font-family: "Noto Sans", sans-serif;
        font-size: 12px;
    }

    .search input::placeholder {
        color: #333;
    }

    .app-button {
        display: grid;
        place-items: center;
        width: 41px;
        padding: 0 4px;
    }

    .app-button .icon {
        width: 22px;
        height: 22px;
    }

    .app-button.open {
        background: linear-gradient(#7fb0e0, #7fb0e0) center bottom / 34px 2px no-repeat;
    }

    .app-button.current {
        background: linear-gradient(#8fb6dc, #8fb6dc) center bottom / 100% 2px no-repeat, #595b5a;
    }
</style>
